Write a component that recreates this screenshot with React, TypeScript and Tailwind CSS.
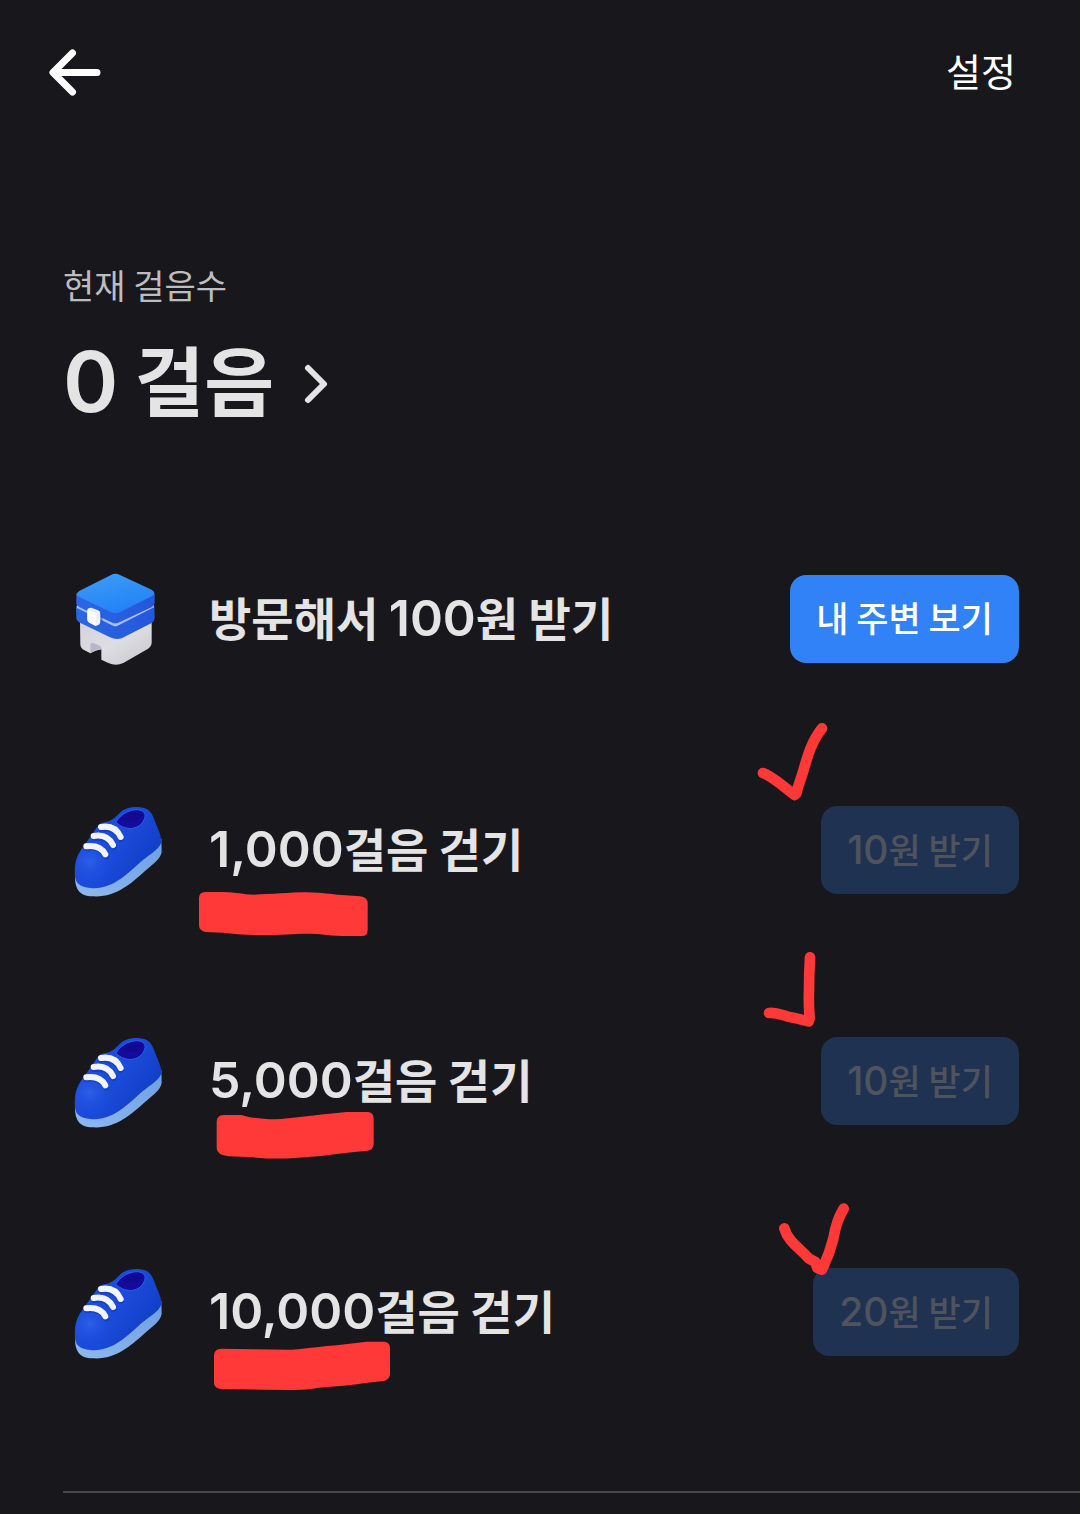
type Mission = {
  digits: string;
  label: string;
  reward: string;
  mark: string;
  scribble: string;
};

const missions: Mission[] = [
  {
    digits: '1,000',
    label: '걸음 걷기',
    reward: '10',
    mark: 'M69 219 C100 231 130 260 160 282 L164 285 L170 279 C172 262 182 240 190 212 C202 172 214 124 246 85',
    scribble:
      'M57 54 Q57 36 76 36 L130 36 C170 37 190 43 220 44 C270 43 330 37 380 37 C430 38 450 43 485 45 L540 49 Q563 52 563 70 L563 150 Q563 168 546 168 L485 168 C440 166 420 161 385 161 C340 161 300 165 250 165 C200 165 160 162 130 158 L76 156 Q57 152 57 136 Z',
  },
  {
    digits: '5,000',
    label: '걸음 걷기',
    reward: '10',
    mark: 'M87 246 C120 244 130 256 160 260 L206 271 L209 262 C206 225 206 205 207 180 C207 140 208 110 210 79',
    scribble:
      'M110 33 Q110 13 130 12 L185 12 C200 18 240 25 285 25 C330 23 400 12 500 3 L565 3 Q581 5 581 23 L581 98 Q581 116 562 119 C500 124 440 134 375 139 C320 144 270 144 220 139 L146 136 Q110 132 110 112 Z',
  },
  {
    digits: '10,000',
    label: '걸음 걷기',
    reward: '20',
    mark: 'M133 199 C144 240 182 260 206 289 L226 300 L232 318 L246 323 L250 314 C264 284 270 270 280 230 C287 188 295 166 311 140',
    scribble:
      'M102 38 Q104 21 122 20 L220 22 L335 23 C380 20 420 14 470 10 L560 -1 L614 -1 Q630 1 630 19 L630 95 Q630 112 612 117 C550 122 510 132 450 134 C400 138 380 144 330 144 L250 143 L122 141 Q102 138 102 122 Z',
  },
];

function ShoeIcon() {
  return (
    <svg viewBox="0 0 360 360" className="-my-4 size-[120px] shrink-0" aria-hidden="true">
      <defs>
        <linearGradient id="shoeBody" x1="0.1" y1="0.3" x2="0.9" y2="0.8">
          <stop offset="0" stopColor="#1d4fe0" />
          <stop offset="0.5" stopColor="#1a4ad8" />
          <stop offset="1" stopColor="#103cc4" />
        </linearGradient>
        <radialGradient id="shoeToe" cx="105" cy="215" r="65" gradientUnits="userSpaceOnUse">
          <stop offset="0" stopColor="#3a6cf0" stopOpacity="0.6" />
          <stop offset="1" stopColor="#1d4fe0" stopOpacity="0" />
        </radialGradient>
        <linearGradient id="shoeSole" x1="0" y1="1" x2="1" y2="0">
          <stop offset="0" stopColor="#8fb9ef" />
          <stop offset="1" stopColor="#6d9fe3" />
        </linearGradient>
      </defs>
      <path
        d="M60 250 C58 300 75 319 112 319 C180 324 228 280 260 252 C290 224 316 210 320 186 L319 146 L250 170 L100 280 Z"
        fill="url(#shoeSole)"
      />
      <path
        d="M60 258 C58 225 62 198 85 170 L108 137 L130 106 Q136 98 152 96 C172 92 180 82 195 68 C215 50 250 47 275 57 C294 67 297 90 307 112 C315 131 320 145 319 158 C309 182 280 194 250 222 C214 254 170 300 106 294 C75 291 61 280 60 258 Z"
        fill="url(#shoeBody)"
      />
      <circle cx="105" cy="215" r="65" fill="url(#shoeToe)" clipPath="url(#shoeToeClip)" />
      <clipPath id="shoeToeClip">
        <path d="M60 258 C58 225 62 198 85 170 L180 150 L190 285 C150 298 120 295 106 294 C75 291 61 280 60 258 Z" />
      </clipPath>
      <path
        d="M182 97 C196 76 216 60 246 59 C264 60 274 69 269 85 C260 110 234 121 211 113 C198 111 189 101 182 97 Z"
        fill="#140a9c"
        stroke="#2a5fe6"
        strokeWidth="3"
      />
      <path d="M204 87 C220 70 246 64 262 73 C257 89 241 99 204 87 Z" fill="#10077f" opacity="0.5" />
      <g fill="none" stroke="#0e35ae" strokeWidth="18" strokeLinecap="round" opacity="0.5">
        <path d="M138 117 C168 113 187 122 198 146" />
        <path d="M117 144 C146 140 163 148 176 171" />
        <path d="M96 174 C124 169 142 180 154 199" />
      </g>
      <g fill="none" stroke="#f3f4fb" strokeWidth="18" strokeLinecap="round">
        <path d="M138 111 C168 106 186 117 197 141" />
        <path d="M116 138 C145 133 163 143 174 165" />
        <path d="M94 169 C124 165 141 174 151 193" />
      </g>
    </svg>
  );
}

function BoxIcon() {
  return (
    <svg viewBox="0 -3 360 360" className="-my-4 size-[120px] shrink-0" aria-hidden="true">
      <defs>
        <linearGradient id="boxTop" x1="0.3" y1="0" x2="0.7" y2="1">
          <stop offset="0" stopColor="#3b9bf7" />
          <stop offset="1" stopColor="#2080f6" />
        </linearGradient>
        <linearGradient id="boxBase" x1="0" y1="0" x2="1" y2="1">
          <stop offset="0" stopColor="#d4d2dc" />
          <stop offset="0.5" stopColor="#dedde2" />
          <stop offset="1" stopColor="#c8c7ce" />
        </linearGradient>
        <linearGradient id="boxSide" x1="0" y1="0" x2="1" y2="0">
          <stop offset="0" stopColor="#2b67e4" />
          <stop offset="1" stopColor="#2457da" />
        </linearGradient>
      </defs>
      <path
        d="M75 180 L290 180 L290 248 Q289 260 278 267 L205 309 Q183 319 160 309 L139 299 L139 268 L122 272 L106 280 L83 268 Q76 262 76 254 Z"
        fill="url(#boxBase)"
      />
      <path d="M106 280 L106 254 Q107 247 114 249 L130 255 Q139 258 139 268 L120 271 Z" fill="#b9b6c8" />
      <path
        d="M63 138 L298 138 L299 173 Q299 183 290 189 L200 235 Q181 240 165 232 L72 187 Q64 182 64 174 Z"
        fill="url(#boxSide)"
      />
      <path d="M66 134 L180 180 L296 134 L297 142 L188 197 Q181 200 174 197 L66 144 Z" fill="#a9bcf5" />
      <path d="M64 100 L299 100 L299 129 Q298 136 291 141 L190 188 Q181 192 172 188 L72 141 Q64 137 64 130 Z" fill="url(#boxSide)" />
      <path
        d="M74 92 L168 45 Q181 37 195 45 L290 89 Q304 97 293 107 L194 157 Q182 163 169 157 L71 110 Q59 101 74 92 Z"
        fill="url(#boxTop)"
      />
      <path d="M132 158 L142 162 L142 186 L132 195 Z" fill="#1c4fc9" opacity="0.6" />
      <path d="M97 150 Q97 145 103 144 L109 143 L129 151 Q136 154 136 161 L136 187 Q135 194 128 196 L122 198 L103 188 Q97 184 97 179 Z" fill="#eef0f8" />
      <path d="M97 150 L119 160 Q123 162 123 168 L123 198 L103 188 Q97 184 97 179 Z" fill="#fafaff" />
    </svg>
  );
}

export default function App() {
  return (
    <div className="min-h-screen overflow-x-hidden bg-[#18181c] font-['Noto_Sans_CJK_KR',sans-serif] text-[#e4e4e5]">
      <header className="flex h-36 items-center justify-between pr-16 pl-12 text-white">
        <button type="button" aria-label="뒤로">
          <svg
            viewBox="0 0 54 54"
            className="size-[54px]"
            fill="none"
            stroke="currentColor"
            strokeWidth="7"
            strokeLinecap="round"
            strokeLinejoin="round"
          >
            <path d="M24.5 8 L5 27.5 L24.5 47 M7 27.5 H49" />
          </svg>
        </button>
        <button type="button" className="pb-1 text-[38px] leading-[56px]">
          설정
        </button>
      </header>

      <main>
        <section className="px-[63px] pt-[118px]">
          <p className="text-[34px] leading-[46px] text-[#bdbdc0]">현재 걸음수</p>
          <button type="button" className="mt-[18px] flex h-[116px] items-center font-semibold">
            <span className="pb-1 font-['Inter',sans-serif] text-[84px]">0</span>
            <span className="ml-4 pb-3 text-[76px]">걸음</span>
            <svg
              viewBox="0 0 28 44"
              className="ml-7 h-11 w-7"
              fill="none"
              stroke="currentColor"
              strokeWidth="6"
              strokeLinecap="round"
              strokeLinejoin="round"
              aria-hidden="true"
            >
              <path d="M6 6 L22 22 L6 38" />
            </svg>
          </button>
        </section>

        <ul className="mt-[133px] flex flex-col gap-[143px]">
          <li className="flex h-[88px] items-center pr-[61px] pl-[55px]">
            <BoxIcon />
            <h2 className="ml-[34px] flex-1 pb-1 text-[46px] leading-[68px] font-semibold">
              방문해서 <span className="font-['Inter',sans-serif] text-[50px]">100</span>원 받기
            </h2>
            <button type="button" className="h-[88px] rounded-2xl bg-[#3182f6] px-[26px] pb-[3px] text-[35px] font-medium text-white">
              내 주변 보기
            </button>
          </li>
          {missions.map((mission) => (
            <li key={mission.digits} className="relative flex h-[88px] items-center pr-[61px] pl-[55px]">
              <ShoeIcon />
              <h2 className="ml-[34px] flex-1 pb-1 text-[46px] leading-[68px] font-semibold">
                <span className="font-['Inter',sans-serif] text-[50px]">{mission.digits}</span>
                {mission.label}
              </h2>
              <button
                type="button"
                disabled
                className="h-[88px] rounded-2xl bg-[#1f3251] px-[26px] text-[35px] font-medium text-[#4f535d]"
              >
                <span className="font-['Inter',sans-serif] text-[39px]">{mission.reward}</span>원 받기
              </button>
              <svg
                viewBox="0 0 360 360"
                className="pointer-events-none absolute -top-[106px] right-[220px] size-[120px]"
                fill="none"
                stroke="#ff3838"
                strokeWidth="32"
                strokeLinecap="round"
                strokeLinejoin="round"
                aria-hidden="true"
              >
                <path d={mission.mark} />
              </svg>
              <svg
                viewBox="0 0 720 192"
                className="pointer-events-none absolute top-[74px] left-[180px] h-16 w-60 overflow-visible"
                fill="#ff3838"
                aria-hidden="true"
              >
                <path d={mission.scribble} />
              </svg>
            </li>
          ))}
        </ul>

        <hr className="mt-[135px] mb-[21px] ml-[63px] border-t-2 border-[#48484c]" />
      </main>
    </div>
  );
}
